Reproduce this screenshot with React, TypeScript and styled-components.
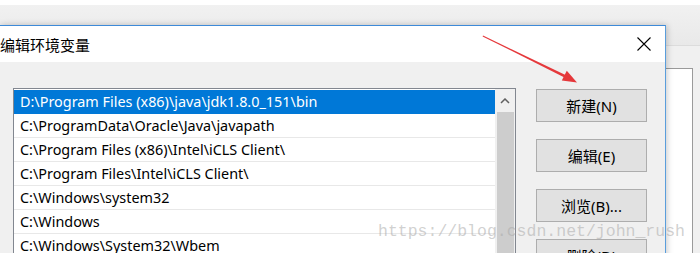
import { styled, createGlobalStyle } from 'styled-components';

const GlobalStyle = createGlobalStyle`
  html, body {
    margin: 0;
    padding: 0;
    background: #ffffff;
    overflow: hidden;
  }
`;

const PATHS = [
  'D:\\Program Files (x86)\\java\\jdk1.8.0_151\\bin',
  'C:\\ProgramData\\Oracle\\Java\\javapath',
  'C:\\Program Files (x86)\\Intel\\iCLS Client\\',
  'C:\\Program Files\\Intel\\iCLS Client\\',
  'C:\\Windows\\system32',
  'C:\\Windows',
  'C:\\Windows\\System32\\Wbem',
];

const BUTTONS = ['新建(N)', '编辑(E)', '浏览(B)...', '删除(D)'];

const UI_FONT = `"Noto Sans", "Noto Sans CJK SC", sans-serif`;

const Screen = styled.div`
  position: relative;
  width: 700px;
  height: 253px;
  overflow: hidden;
  display: flex;
  flex-direction: column;
  font-family: ${UI_FONT};
`;

// the window behind the dialog
const BackTop = styled.div`
  height: 5px;
  flex-shrink: 0;
  background: #ffffff;
`;
const BackHeader = styled.div`
  height: 40px;
  flex-shrink: 0;
  background: linear-gradient(#f1f1f1, #e9e9e9);
  border-bottom: 1px solid #dcdcdc;
`;
const BackBody = styled.div`
  flex: 1;
  background: #f0f0f0;
  display: flex;
  justify-content: flex-end;
  padding: 22px 7px 0 0;
`;
const BackField = styled.div`
  width: 60px;
  background: #ffffff;
  border: 1px solid #9a9a9a;
  border-bottom: none;
`;

const Dialog = styled.div`
  position: absolute;
  left: 0;
  top: 25px;
  width: 665px;
  height: 240px;
  overflow: hidden;
  display: flex;
  flex-direction: column;
  background: #f0f0f0;
  border-top: 1px solid #3d8ad8;
  border-right: 1px solid #5a9edc;
  box-shadow: 1px 0 6px rgba(0, 0, 0, 0.22);
`;

const TitleBar = styled.div`
  height: 36px;
  flex-shrink: 0;
  background: #ffffff;
  display: flex;
  align-items: center;
  justify-content: space-between;
  padding-right: 14px;
`;
const Title = styled.div`
  font-family: "Noto Sans CJK SC", sans-serif;
  font-size: 15px;
  color: #000000;
`;
const CloseButton = styled.div`
  width: 14px;
  height: 14px;
  display: flex;
`;

const Body = styled.div`
  flex-shrink: 0;
  display: flex;
  align-items: flex-start;
  padding: 26px 0 0 13px;
  gap: 20px;
`;

const ListBox = styled.div`
  width: 501px;
  height: 200px;
  flex-shrink: 0;
  border: 1px solid #828790;
  background: #ffffff;
  display: flex;
  padding-top: 1px;
`;
const Rows = styled.div`
  flex: 1;
  display: flex;
  flex-direction: column;
`;
const Row = styled.div<{ selected?: boolean }>`
  height: 23px;
  flex-shrink: 0;
  display: flex;
  align-items: center;
  padding-left: 6px;
  font-size: 14.4px;
  white-space: nowrap;
  border-bottom: 1px solid ${p => (p.selected ? '#0078d7' : '#e8e8e8')};
  background: ${p => (p.selected ? '#0078d7' : '#ffffff')};
  color: ${p => (p.selected ? '#ffffff' : '#000000')};
`;

const ScrollBar = styled.div`
  width: 20px;
  display: flex;
  flex-direction: column;
  align-items: center;
  background: #f0f0f0;
  margin-top: -1px;
`;
const ScrollArrow = styled.div`
  height: 23px;
  width: 100%;
  display: flex;
  align-items: center;
  justify-content: center;
`;
const ScrollThumb = styled.div`
  flex: 1;
  width: 17px;
  background: #cdcdcd;
`;

const ButtonColumn = styled.div`
  display: flex;
  flex-direction: column;
  gap: 17px;
  padding-top: 1px;
`;
const Button = styled.div`
  width: 109px;
  height: 31px;
  flex-shrink: 0;
  border: 1px solid #adadad;
  background: #e1e1e1;
  display: flex;
  align-items: center;
  justify-content: center;
  font-size: 15px;
  color: #000000;
`;

const Watermark = styled.div`
  position: absolute;
  left: 378px;
  top: 222px;
  font-family: "Liberation Mono", monospace;
  font-size: 16.5px;
  color: rgba(170, 170, 170, 0.55);
  white-space: nowrap;
  pointer-events: none;
`;

const Overlay = styled.svg`
  position: absolute;
  left: 0;
  top: 0;
  pointer-events: none;
`;

export default function App() {
  return (
    <>
      <GlobalStyle />
      <Screen>
        <BackTop />
        <BackHeader />
        <BackBody>
          <BackField />
        </BackBody>

        <Dialog>
          <TitleBar>
            <Title>编辑环境变量</Title>
            <CloseButton>
              <svg width="14" height="14" viewBox="0 0 14 14">
                <path d="M0.5 0.5 L13.5 13.5 M13.5 0.5 L0.5 13.5" stroke="#000" strokeWidth="1.1" />
              </svg>
            </CloseButton>
          </TitleBar>
          <Body>
            <ListBox>
              <Rows>
                {PATHS.map((p, i) => (
                  <Row key={i} selected={i === 0}>{p}</Row>
                ))}
              </Rows>
              <ScrollBar>
                <ScrollArrow>
                  <svg width="10" height="6" viewBox="0 0 10 6">
                    <path d="M1 5 L5 1 L9 5" fill="none" stroke="#606060" strokeWidth="1.5" />
                  </svg>
                </ScrollArrow>
                <ScrollThumb />
              </ScrollBar>
            </ListBox>
            <ButtonColumn>
              {BUTTONS.map(b => (
                <Button key={b}>{b}</Button>
              ))}
            </ButtonColumn>
          </Body>
        </Dialog>

        <Watermark>https://blog.csdn.net/john_rush</Watermark>

        <Overlay width="700" height="253" viewBox="0 0 700 253">
          <polygon points="483,35.6 565.5,75 564.5,77.4 482.6,36.4" fill="#e5383b" />
          <polygon points="577,82.5 561.8,80.6 566.8,70.8" fill="#e5383b" />
        </Overlay>
      </Screen>
    </>
  );
}
